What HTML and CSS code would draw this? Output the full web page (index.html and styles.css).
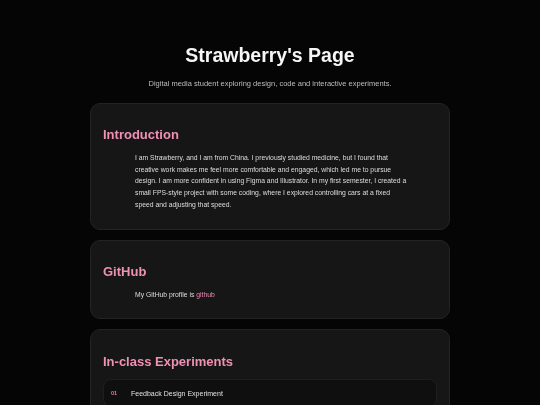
FILE: index.html
```html
<!DOCTYPE html>
<html lang="en">
<head>
<meta charset="utf-8">
<title>Strawberry's Page</title>
<link rel="stylesheet" href="styles.css">
</head>
<body>
<div class="page">
<header class="hero">
  <h1 class="title">Strawberry's Page</h1>
  <p class="subtitle">Digital media student exploring design, code and interactive experiments.</p>
</header>
<main class="container">
  <section class="card">
    <h2 class="card-title">Introduction</h2>
    <p class="card-text">I am Strawberry, and I am from China. I previously studied medicine, but I found that creative work makes me feel more comfortable and engaged, which led me to pursue design. I am more confident in using Figma and Illustrator. In my first semester, I created a small FPS-style project with some coding, where I explored controlling cars at a fixed speed and adjusting that speed.</p>
  </section>
  <section class="card">
    <h2 class="card-title">GitHub</h2>
    <p class="card-text">My GitHub profile is <a class="link" href="#">github</a></p>
  </section>
  <section class="card">
    <h2 class="card-title card-title-lg">In-class Experiments</h2>
    <ul class="exp-list">
      <li class="exp-item"><span class="exp-num">01</span><span class="exp-name">Feedback Design Experiment</span></li>
      <li class="exp-item"><span class="exp-num">02</span><span class="exp-name">Interaction Experiment</span></li>
    </ul>
  </section>
</main>
</div>
</body>
</html>
```
FILE: styles.css
```css
html, body {
  margin: 0;
  padding: 0;
  background: #050505;
}
body {
  font-family: "Liberation Sans", Arial, sans-serif;
  color: #e6e6e6;
}
.page {
  will-change: transform;
}
.hero {
  text-align: center;
  padding-top: 34px;
  padding-bottom: 13px;
}
.title {
  margin: 0;
  font-size: 19.5px;
  line-height: 42px;
  font-weight: 700;
  color: #f5f5f5;
}
.subtitle {
  margin: 2px 0 0;
  font-size: 7.5px;
  line-height: 12px;
  color: #bdbdbd;
}
.container {
  width: 360px;
  margin: 0 auto;
  display: flex;
  flex-direction: column;
  gap: 10px;
}
.card {
  background: #161616;
  border: 1px solid #232323;
  border-radius: 10px;
  padding: 0 12px;
  box-sizing: border-box;
  overflow: hidden;
}
.card-title {
  margin: 23px 0 10px;
  font-size: 13px;
  line-height: 15px;
  font-weight: 700;
  color: #f090b4;
}
.card-title-lg {
  margin-top: 24px;
}
.card-text {
  margin: 0 0 18px;
  padding: 0 28px 0 32px;
  font-size: 6.8px;
  line-height: 11.7px;
  color: #dedede;
}
.link {
  color: #e88ab2;
  text-decoration: none;
}
.exp-list {
  list-style: none;
  margin: 0 0 14px;
  padding: 0;
  display: flex;
  flex-direction: column;
  gap: 6px;
}
.exp-item {
  display: flex;
  align-items: center;
  gap: 14px;
  padding: 0 7px;
  height: 26px;
  background: #0f0f0f;
  border: 1px solid #1f1f1f;
  border-radius: 8px;
}
.exp-num {
  font-size: 5.5px;
  font-weight: 700;
  color: #d97fa6;
  width: 6px;
}
.exp-name {
  font-size: 7px;
  color: #e0e0e0;
}
```
